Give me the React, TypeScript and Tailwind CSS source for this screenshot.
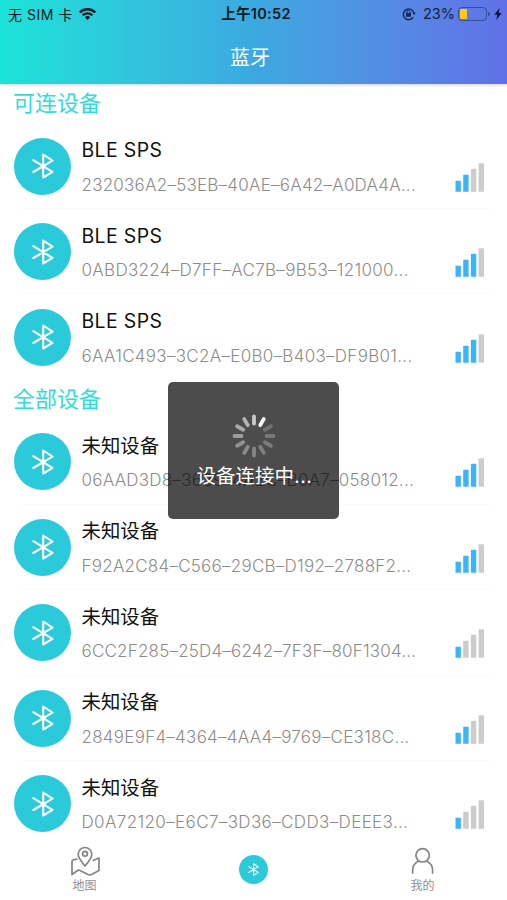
type Device = { name: string; id: string; level: number; spacing: string };

const connectable: Device[] = [
  { name: "BLE SPS", id: "232036A2–53EB–40AE–6A42–A0DA4A...", level: 2, spacing: "tracking-[0.23px]" },
  { name: "BLE SPS", id: "0ABD3224–D7FF–AC7B–9B53–121000...", level: 3, spacing: "tracking-[0.3px]" },
  { name: "BLE SPS", id: "6AA1C493–3C2A–E0B0–B403–DF9B01...", level: 3, spacing: "tracking-[0.29px]" },
];

const allDevices: Device[] = [
  { name: "未知设备", id: "06AAD3D8–3639–4A2C–B0A7–058012...", level: 3, spacing: "tracking-[0.24px]" },
  { name: "未知设备", id: "F92A2C84–C566–29CB–D192–2788F2...", level: 3, spacing: "tracking-[0.24px]" },
  { name: "未知设备", id: "6CC2F285–25D4–6242–7F3F–80F1304...", level: 1, spacing: "tracking-[0.2px]" },
  { name: "未知设备", id: "2849E9F4–4364–4AA4–9769–CE318C...", level: 2, spacing: "tracking-[0.26px]" },
  { name: "未知设备", id: "D0A72120–E6C7–3D36–CDD3–DEEE3...", level: 1, spacing: "tracking-[0.37px]" },
];

const barHeights = [11, 17, 23, 28.5];

function BluetoothIcon({ className, strokeWidth }: { className: string; strokeWidth: number }) {
  return (
    <svg viewBox="0 0 22 26" className={className} fill="none" stroke="white" strokeWidth={strokeWidth} strokeLinejoin="round" strokeLinecap="round">
      <path d="M1.3 7.2 20.5 18.8 11.2 24.5V1.5L20.5 7.7 1.3 19" />
    </svg>
  );
}

function WifiIcon() {
  return (
    <svg viewBox="0 0 17 12" className="ml-[6px] h-[12px] w-[17px]" fill="none" stroke="#0b1c22" strokeWidth="2.3">
      <path d="M.8 4.4a11 11 0 0 1 15.4 0" />
      <path d="M3.6 7.3a7 7 0 0 1 9.8 0" />
      <path d="M8.5 12 5.8 9.2a3.9 3.9 0 0 1 5.4 0Z" fill="#0b1c22" stroke="none" />
    </svg>
  );
}

function StatusBar() {
  return (
    <div className="grid h-7 grid-cols-[1fr_auto_1fr] items-center text-[14px] text-[#0b1c22]">
      <div className="flex items-center pl-2">
        <span className="tracking-[0.5px]">无 SIM 卡</span>
        <WifiIcon />
      </div>
      <div className="pl-[5px] text-[14.5px] font-semibold tracking-[0.3px] whitespace-nowrap">上午10:52</div>
      <div className="flex items-center justify-end pr-[5px]">
        <svg viewBox="0 0 14 14" className="mr-[7px] h-[14px] w-[14px]" fill="none" stroke="#14284a" strokeWidth="1.4">
          <path d="M11.3 10.2A5.4 5.4 0 1 1 12 6" />
          <path d="M10.4 5.7h3.4L12.1 8Z" fill="#14284a" stroke="none" />
          <rect x="4" y="6" width="5" height="3.8" rx=".5" fill="#14284a" stroke="none" />
          <path d="M5 6V4.8a1.5 1.5 0 0 1 3 0V6" strokeWidth="1" />
        </svg>
        <span className="text-[14.5px] text-[#122244]">23%</span>
        <div className="ml-[3px] h-[14px] w-[29px] rounded-[4px] border border-[#33509b] p-[1px]">
          <div className="h-full w-[7px] rounded-[1px] bg-[#ffc91a]" />
        </div>
        <div className="ml-px h-[4px] w-[2px] rounded-r bg-[#33509b]" />
        <svg viewBox="0 0 8 12" className="ml-[4px] h-[12px] w-[8px]" fill="#0c1230">
          <path d="M5.6 0 .4 6.8h3L2.2 12 7.7 4.9H4.6Z" />
        </svg>
      </div>
    </div>
  );
}

function SignalIcon({ level }: { level: number }) {
  return (
    <svg viewBox="0 0 29 29" className="h-[29px] w-[29px]">
      {barHeights.map((height, i) => (
        <rect key={height} x={0.5 + i * 7.7} y={28.8 - height} width="5.4" height={height} rx=".6" fill={i < level ? "#3cb4fa" : "#cccccc"} />
      ))}
    </svg>
  );
}

function DeviceRow({ device }: { device: Device }) {
  return (
    <div className="flex h-[85.5px] shrink-0 items-center pl-[14px]">
      <div className="flex h-[57px] w-[57px] shrink-0 items-center justify-center rounded-full bg-[#2bcadb]">
        <BluetoothIcon className="h-[26px] w-[22px]" strokeWidth={2.1} />
      </div>
      <div className="ml-[10.5px] h-[56px] w-[360px] shrink-0 whitespace-nowrap">
        <div className="h-[24px] text-[19.4px] leading-[24px] text-[#111111]">
          <span className={device.name === "BLE SPS" ? "tracking-[0.4px]" : ""}>{device.name}</span>
        </div>
        <div className={`mt-[12.6px] text-[17px] leading-[20px] font-light text-[#8c8c8c] ${device.spacing}`}>{device.id}</div>
      </div>
      <div className="mt-[22px] ml-[13.5px]">
        <SignalIcon level={device.level} />
      </div>
    </div>
  );
}

function Section({ title, devices }: { title: string; devices: Device[] }) {
  return (
    <section>
      <h2 className="flex h-[39.3px] items-center pl-[13px] text-[22px] text-[#2fdcdc]">{title}</h2>
      {devices.map((device, i) => (
        <div key={device.id}>
          {i > 0 && <div className="-mt-px mr-4 ml-5 h-px bg-[#fafafa]" />}
          <DeviceRow device={device} />
        </div>
      ))}
    </section>
  );
}

function Spinner() {
  const shades = ["#c9c9c9", "#ffffff", "#737373", "#777777", "#7c7c7c", "#7f7f7f", "#858585", "#8b8b8b", "#939393", "#9d9d9d", "#a8a8a8", "#b5b5b5"];
  return (
    <svg viewBox="-22 -22 44 44" className="h-[44px] w-[44px]" strokeWidth="3.8" strokeLinecap="round">
      {shades.map((shade, i) => (
        <path key={shade} d="M0-12.5V-19.5" stroke={shade} transform={`rotate(${i * 30})`} />
      ))}
    </svg>
  );
}

function TabBar() {
  return (
    <nav className="grid h-[66px] shrink-0 grid-cols-3 bg-white text-[12px] text-[#8f8f8f]">
      <div className="flex flex-col items-center pt-[12px]">
        <svg viewBox="0 0 30 30" className="h-[30px] w-[30px]" fill="none" stroke="#858585" strokeWidth="1.7" strokeLinejoin="round" strokeLinecap="round">
          <path d="M15 20C11.5 16 8.2 12.2 8.2 8.3a6.8 6.8 0 0 1 13.6 0c0 3.9-3.3 7.7-6.8 11.7Z" />
          <circle cx="15" cy="7.8" r="2.4" />
          <path d="M7 13 3.5 13.8Q2 14.2 2 15.5v13l6-4.2q1-.4 2 .1l7.5 3.8q2.5 1.1 4.500.1l7-3.8V12l-5.500 2.300" />
        </svg>
        <span className="mt-[3px] leading-[14px]">地图</span>
      </div>
      <div className="flex items-start justify-center pt-[21px]">
        <div className="flex h-[29px] w-[29px] items-center justify-center rounded-full bg-[#2bcadb]">
          <BluetoothIcon className="h-[13px] w-[11px]" strokeWidth={2.2} />
        </div>
      </div>
      <div className="flex flex-col items-center pt-[12px]">
        <svg viewBox="0 0 26 30" className="h-[30px] w-[26px]" fill="none" stroke="#858585" strokeWidth="1.7" strokeLinecap="round">
          <circle cx="12.6" cy="9.3" r="6.7" />
          <path d="M2.6 27v-2.5c0-4.3 2-7.3 5.3-9M22.600 27v-2.500c0-4.300-2-7.300-5.300-9" />
        </svg>
        <span className="mt-[3px] leading-[14px]">我的</span>
      </div>
    </nav>
  );
}

export default function App() {
  return (
    <div className="relative flex h-[900px] w-[507px] flex-col overflow-hidden bg-white font-[Inter,'Noto_Sans_CJK_SC',sans-serif]">
      <header className="z-10 h-[84px] shrink-0 bg-linear-to-r from-[#1be3d8] via-[#3ba9e0] to-[#6070e6] shadow-[0_1px_3px_rgba(0,0,0,0.2)]">
        <StatusBar />
        <h1 className="flex h-[59px] items-center justify-center pr-[7px] text-[20px] text-white">蓝牙</h1>
      </header>
      <main className="min-h-0 flex-1 overflow-hidden">
        <Section title="可连设备" devices={connectable} />
        <Section title="全部设备" devices={allDevices} />
      </main>
      <TabBar />

      {/* connecting toast */}
      <div className="absolute top-[382px] left-[168px] flex h-[137px] w-[171px] flex-col items-center rounded-[5px] bg-black/70 pt-[32px]">
        <Spinner />
        <p className="mt-[4px] ml-[2px] text-[19.5px] leading-[28px] whitespace-nowrap text-white">
          设备连接中<span className="tracking-[0.6px]">...</span>
        </p>
      </div>
    </div>
  );
}
